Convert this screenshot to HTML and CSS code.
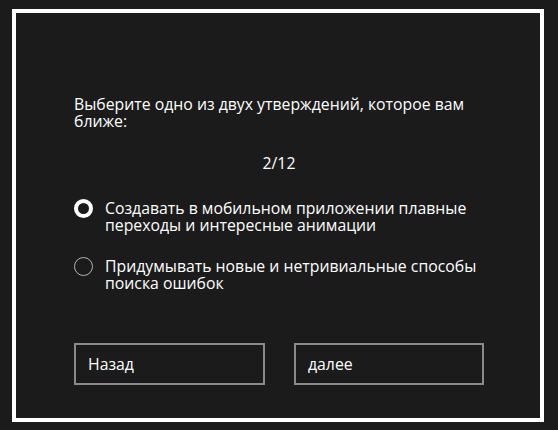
FILE: index.html
```html
<!DOCTYPE html>
<html lang="ru">
<head>
<meta charset="utf-8">
<link rel="stylesheet" href="styles.css">
</head>
<body>
<div class="frame">
  <p class="question">Выберите одно из двух утверждений, которое вам ближе:</p>
  <div class="counter">2/12</div>
  <div class="options">
    <label class="option">
      <span class="radio checked"></span>
      <span class="opt-text">Создавать в мобильном приложении плавные переходы и интересные анимации</span>
    </label>
    <label class="option">
      <span class="radio"></span>
      <span class="opt-text">Придумывать новые и нетривиальные способы поиска ошибок</span>
    </label>
  </div>
  <div class="buttons">
    <div class="btn">Назад</div>
    <div class="btn">далее</div>
  </div>
</div>
</body>
</html>
```
FILE: styles.css
```css
html, body {
  margin: 0;
  padding: 0;
  background: #1b1b1b;
}
body {
  font-family: "Open Sans", "Noto Sans", sans-serif;
  color: #ffffff;
  font-size: 15.8px;
}
.frame {
  box-sizing: border-box;
  margin: 9px 14px 0 12px;
  width: 532px;
  height: 413px;
  border: 4px solid #ffffff;
  padding: 83px 56px 0 58px;
  display: flex;
  flex-direction: column;
}
.question {
  margin: 0;
  line-height: 17px;
}
.counter {
  margin-top: 25px;
  text-align: center;
  line-height: 17px;
}
.options {
  margin-top: 28px;
  display: flex;
  flex-direction: column;
  gap: 24px;
}
.option {
  display: flex;
  align-items: flex-start;
  gap: 12px;
}
.radio {
  flex: none;
  box-sizing: border-box;
  width: 19px;
  height: 19px;
  border-radius: 50%;
  border: 1.5px solid #b4b4b4;
  margin-top: -1px;
}
.radio.checked {
  border: 4.5px solid #ffffff;
}
.opt-text {
  line-height: 17px;
}
.buttons {
  margin-top: 51px;
  display: flex;
  gap: 29px;
}
.btn {
  box-sizing: border-box;
  width: 191px;
  height: 42px;
  border: 2px solid #8a8a8a;
  padding-left: 12px;
  display: flex;
  align-items: center;
}
.btn + .btn {
  width: 190px;
}
```
